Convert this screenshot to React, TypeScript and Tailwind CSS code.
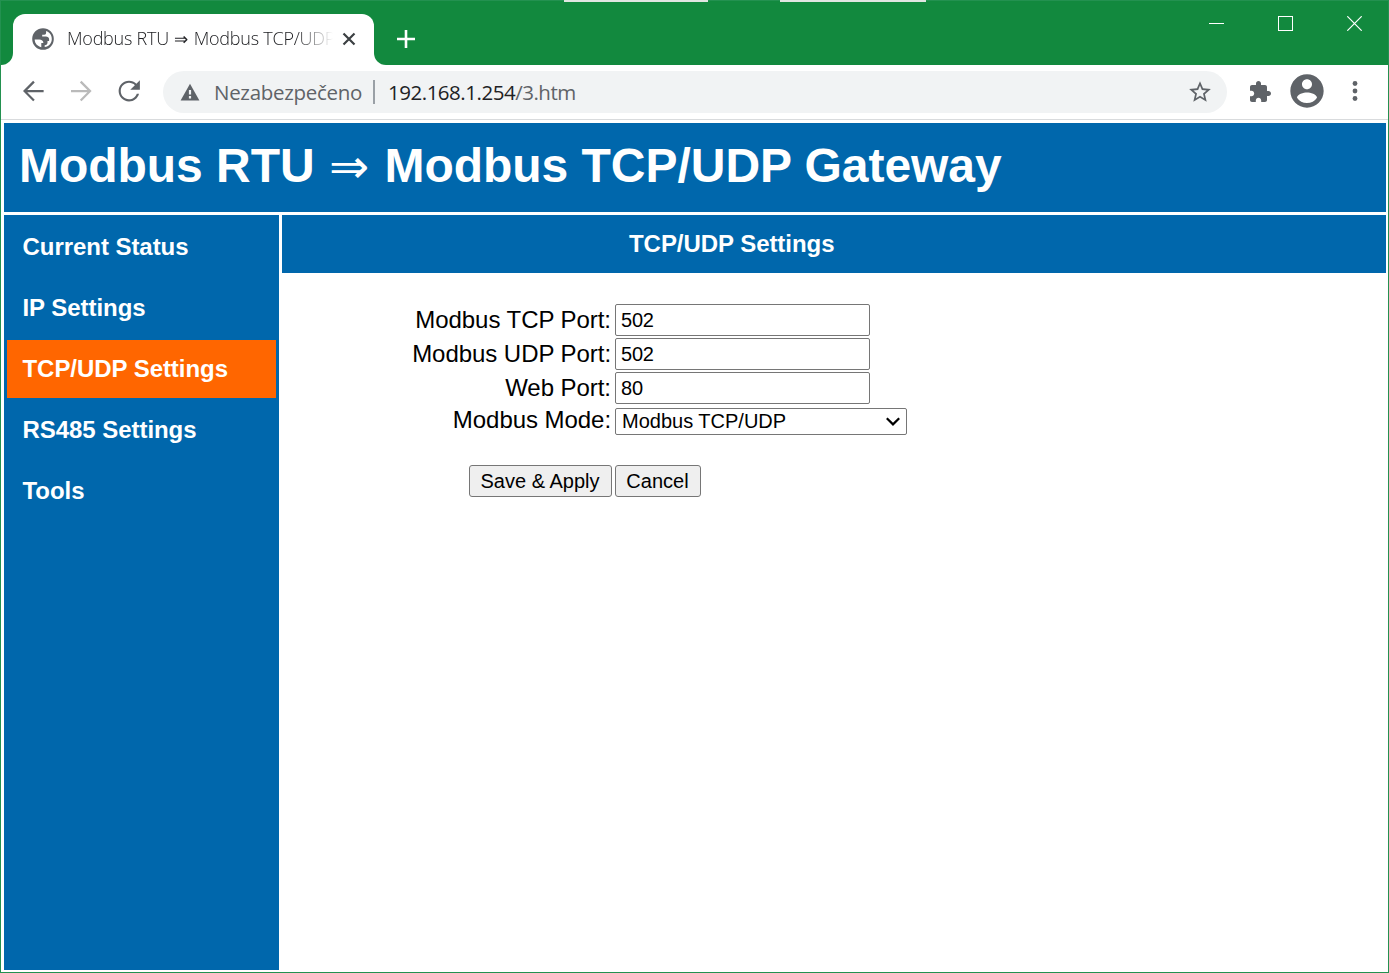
import type { ReactNode } from "react";

const menu = [
  { label: "Current Status", active: false },
  { label: "IP Settings", active: false },
  { label: "TCP/UDP Settings", active: true },
  { label: "RS485 Settings", active: false },
  { label: "Tools", active: false },
];

const ports = [
  { label: "Modbus TCP Port:", value: "502" },
  { label: "Modbus UDP Port:", value: "502" },
  { label: "Web Port:", value: "80" },
];

function Glyph({ d, className, box = "0 0 24 24" }: { d: string; className: string; box?: string }) {
  return (
    <svg viewBox={box} className={className} fill="currentColor">
      <path d={d} />
    </svg>
  );
}

function WindowButton({ children }: { children: ReactNode }) {
  return <button className="flex h-[45px] w-[69px] items-center justify-center">{children}</button>;
}

function TitleBar() {
  return (
    <div className="relative flex h-16 shrink-0 items-end bg-[#12893e]">
      <div className="absolute -top-px left-[563px] h-0.5 w-36 bg-[#e1e6e2]" />
      <div className="absolute -top-px left-[779px] h-0.5 w-[146px] bg-[#e1e6e2]" />
      <div className="size-3 bg-white">
        <div className="size-3 rounded-br-xl bg-[#12893e]" />
      </div>
      <div className="flex h-[51px] w-[361px] items-center rounded-t-xl bg-white pb-px pl-[18px]">
        <Glyph
          className="size-6 shrink-0 text-[#5f6368]"
          d="M12 1.2a10.8 10.8 0 1 0 0 21.6 10.8 10.8 0 0 0 0-21.6ZM3.700 12.600h4.500c2.500 0 4.200 1.500 4.200 3.500h-2.100v4.100c-3.900-.8-6.600-3.900-6.600-7.600Zm10 7.500v-1.900c1.900 0 2.800-1 2.800-2.600v-1.500h1.600v-2.200c0-1.500-1.500-2.400-3.200-2.400h-3.700V7.700h2c1.300 0 1.900-1 1.900-2v-1.700c3.500 1 5.700 4.200 5.700 7.900 0 4.100-3 7.600-7.100 8.200Z"
        />
        <div className="mb-[2px] ml-3 w-[275px] shrink-0 whitespace-nowrap font-['Open_Sans',sans-serif] text-[18px] font-light leading-6 tracking-[-0.230px] text-[#202124] [mask-image:linear-gradient(to_right,black_228px,transparent_266px)]">
          Modbus RTU <span className="ml-px mr-[1px] font-['DejaVu_Sans',sans-serif] text-[17px]">⇒</span> Modbus TCP/UDP
        </div>
        <svg viewBox="0 0 14 14" className="size-3.5 shrink-0 text-[#3c4043]" fill="none" stroke="currentColor" strokeWidth="2.200">
          <path d="M1.500 1.500l11 11M12.500 1.500l-11 11" />
        </svg>
      </div>
      <div className="size-3 bg-white">
        <div className="size-3 rounded-bl-xl bg-[#12893e]" />
      </div>
      <svg viewBox="0 0 18 18" className="mb-[17px] ml-[11px] size-[18px] text-white" fill="none" stroke="currentColor" strokeWidth="2.600">
        <path d="M9 0v18M0 9h18" />
      </svg>
      <div className="-mr-px ml-auto flex self-start">
        <WindowButton>
          <span className="mb-px h-px w-[15px] bg-white" />
        </WindowButton>
        <WindowButton>
          <span className="size-[15px] border border-white" />
        </WindowButton>
        <WindowButton>
          <svg viewBox="0 0 15 15" className="size-[15px]" fill="none" stroke="white" strokeWidth="1.200">
            <path d="M.3.3l14.400 14.400M14.700.3L.3 14.700" />
          </svg>
        </WindowButton>
      </div>
    </div>
  );
}

function Toolbar() {
  return (
    <div className="flex h-[55px] shrink-0 items-center border-b border-[#d9dbdd] bg-white pl-[17px] text-[#5f6368]">
      <Glyph className="mb-[2px] size-[30px] shrink-0" d="M20.500 11.100H7.400l6-6L12.100 3.800 4 12l8.100 8.200 1.300-1.300-6-6h13.100z" />
      <Glyph className="mb-[2px] ml-[18px] size-[30px] shrink-0 text-[#bababa]" d="M4 11.100h13.100l-6-6 1.300-1.300L20.500 12l-8.100 8.200-1.300-1.300 6-6H4z" />
      <Glyph
        className="mb-[2px] ml-[18px] size-[30px] shrink-0"
        d="M17.900 6.100C16.400 4.600 14.300 3.700 12 3.700c-4.600 0-8.300 3.700-8.300 8.300s3.700 8.300 8.300 8.300c3.900 0 7.100-2.600 8-6.200h-1.800c-.9 2.600-3.300 4.500-6.200 4.500-3.700 0-6.600-2.900-6.600-6.600S8.300 5.400 12 5.400c1.800 0 3.500.7 4.700 1.900L13 11h7.700V3.400z"
      />
      <div className="ml-[19px] flex h-[42px] w-[1064px] shrink-0 items-center rounded-full bg-[#f1f3f4] pl-[17px] pr-[14.500px] font-['Open_Sans',sans-serif] text-[20.500px] leading-7">
        <svg viewBox="0 0 20 18" className="h-[18px] w-5 shrink-0">
          <path d="M10 .8L19.400 17.400H.6z" fill="currentColor" />
          <path d="M10 7v4.500M10 13v2.500" stroke="#f1f3f4" strokeWidth="2.200" />
        </svg>
        <span className="ml-[14px] w-[159px] whitespace-nowrap tracking-[-0.300px]">Nezabezpečeno</span>
        <span className="h-6 w-[1.500px] bg-[#9aa0a6]" />
        <span className="ml-[13.500px] whitespace-nowrap tracking-[-0.480px]">
          <span className="text-[#202124]">192.168.1.254</span>/3.htm
        </span>
        <Glyph
          className="ml-auto size-[26px]"
          d="M22 9.240l-7.190-.62L12 2 9.190 8.630 2 9.240l5.460 4.730L5.820 21 12 17.270 18.180 21l-1.630-7.030L22 9.240zM12 15.400l-3.760 2.270 1-4.280-3.320-2.880 4.380-.38L12 6.100l1.710 4.040 4.380.38-3.320 2.880 1 4.280L12 15.400z"
        />
      </div>
      <Glyph
        className="ml-[21px] size-6 shrink-0"
        d="M20.500 11H19V7c0-1.100-.9-2-2-2h-4V3.500C13 2.120 11.880 1 10.500 1S8 2.120 8 3.500V5H4c-1.100 0-1.990.9-1.990 2v3.800H3.500c1.490 0 2.700 1.210 2.700 2.700s-1.210 2.700-2.700 2.700H2V20c0 1.100.9 2 2 2h3.800v-1.500c0-1.490 1.210-2.700 2.700-2.700 1.490 0 2.700 1.210 2.700 2.700V22H17c1.100 0 2-.9 2-2v-4h1.500c1.380 0 2.500-1.120 2.500-2.500S21.880 11 20.500 11z"
      />
      <Glyph
        className="mb-[2px] ml-[15px] size-10 shrink-0"
        d="M12 2C6.480 2 2 6.480 2 12s4.480 10 10 10 10-4.480 10-10S17.520 2 12 2zm0 3c1.660 0 3 1.340 3 3s-1.340 3-3 3-3-1.340-3-3 1.340-3 3-3zm0 14.200c-2.500 0-4.710-1.280-6-3.220.03-1.990 4-3.080 6-3.080 1.990 0 5.970 1.090 6 3.080-1.290 1.940-3.500 3.220-6 3.220z"
      />
      <svg viewBox="0 0 6 22" className="mb-[2px] ml-[25px] h-[22px] w-1.5" fill="currentColor">
        <circle cx="3" cy="3.500" r="2.400" />
        <circle cx="3" cy="11" r="2.400" />
        <circle cx="3" cy="18.500" r="2.400" />
      </svg>
    </div>
  );
}

function SettingsForm() {
  return (
    <form className="pt-[30px] text-[20px]">
      {ports.map((p) => (
        <div key={p.label} className="flex h-[34px] items-center">
          <label className="w-[329px] text-right text-[24px] leading-8 tracking-[-0.05px]">{p.label}</label>
          <input
            defaultValue={p.value}
            className="ml-1 h-8 w-[255px] rounded-[2px] border border-[#767676] px-[5px] tracking-[-0.2px]"
          />
        </div>
      ))}
      <div className="flex h-[34px] items-start">
        <label className="-mt-px w-[329px] text-right text-[24px] leading-8 tracking-[-0.05px]">Modbus Mode:</label>
        <button type="button" className="ml-1 mt-[3px] flex h-[27px] w-[292px] items-center justify-between rounded-[2px] border border-[#767676] px-[6px] leading-6">
          <span className="mb-[2px]">Modbus TCP/UDP</span>
          <svg viewBox="0 0 14 9" className="h-[9px] w-3.5" fill="none" stroke="black" strokeWidth="2.200">
            <path d="M.8 1.200L7 7.400l6.200-6.200" />
          </svg>
        </button>
      </div>
      <div className="mt-[26px] flex gap-[3px] pl-[187px]">
        <button type="button" className="h-8 w-[143px] rounded-[3px] border border-[#767676] bg-[#efefef] pb-px pr-px">
          Save &amp; Apply
        </button>
        <button type="button" className="h-8 w-[86px] rounded-[3px] border border-[#767676] bg-[#efefef] pb-px pr-px">
          Cancel
        </button>
      </div>
    </form>
  );
}

export default function App() {
  return (
    <div className="flex h-[973px] w-[1389px] flex-col border border-[#239150] bg-white">
      <TitleBar />
      <Toolbar />
      <main className="flex min-h-0 flex-1 flex-col gap-[3px] pb-0.5 pl-[3px] pr-0.5 pt-[3px] font-['Liberation_Sans',Arial,sans-serif] text-black">
        <header className="h-[89px] shrink-0 bg-[#0067ac] pl-[15px] pt-[15px] text-white">
          <h1 className="whitespace-nowrap text-[48px] font-bold leading-[56px] tracking-[-0.03px]">
            Modbus RTU <span className="ml-px mr-[2px] inline-block translate-y-px font-['DejaVu_Sans',sans-serif] font-normal leading-none">⇒</span> Modbus TCP/UDP Gateway
          </h1>
        </header>
        <div className="flex min-h-0 flex-1 gap-[3px]">
          <nav className="flex w-[275px] shrink-0 flex-col gap-[3px] bg-[#0067ac] p-[3px] text-[24px] font-bold tracking-[-0.05px] text-white">
            {menu.map((m) => (
              <a
                key={m.label}
                className={`flex h-[58px] shrink-0 items-center pl-[15.500px] ${m.active ? "bg-[#ff6600]" : ""}`}
              >
                {m.label}
              </a>
            ))}
          </nav>
          <section className="flex-1">
            <h2 className="flex h-[58px] items-center bg-[#0067ac] pl-[347px] text-[24px] font-bold tracking-[-0.05px] text-white">
              TCP/UDP Settings
            </h2>
            <SettingsForm />
          </section>
        </div>
      </main>
    </div>
  );
}
